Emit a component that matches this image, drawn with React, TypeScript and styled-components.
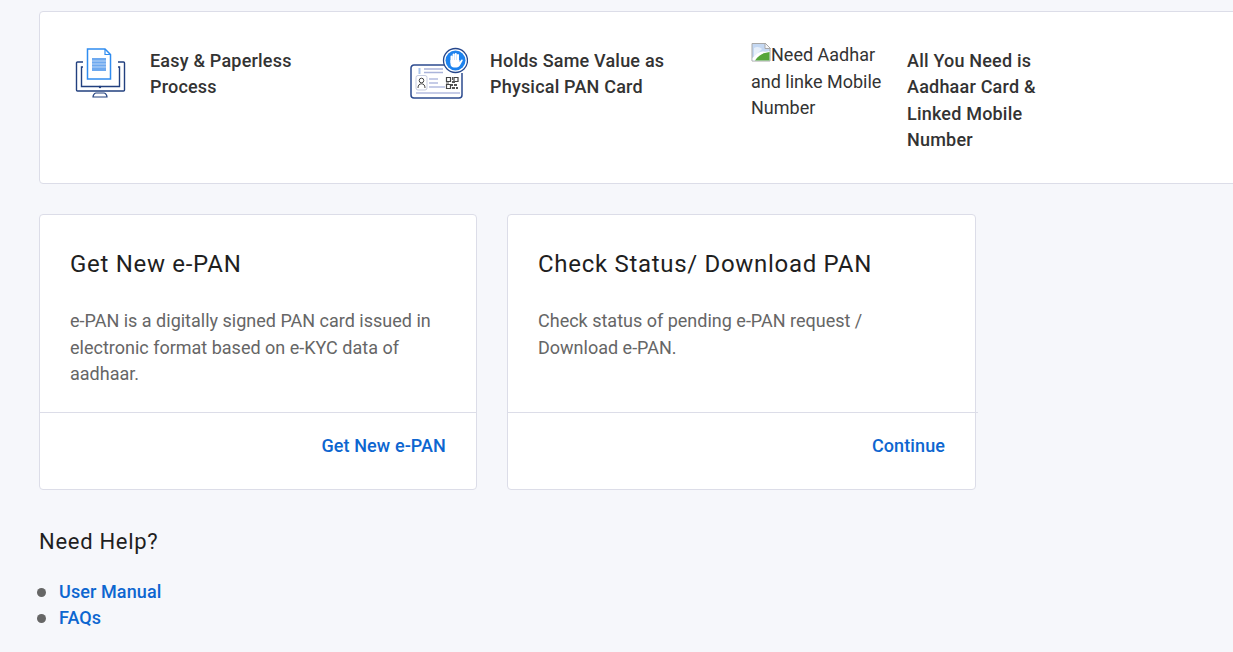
import React from "react";
import styled, { createGlobalStyle } from "styled-components";

const GlobalStyle = createGlobalStyle`
  html, body {
    margin: 0;
    padding: 0;
    background: #f6f7fb;
    overflow: hidden;
  }
  body {
    font-family: Roboto, "Liberation Sans", sans-serif;
  }
`;

const DocIcon = () => (
  <svg width="52" height="52" viewBox="0 0 52 52" fill="none">
    <path d="M8 15H2.500a1 1 0 0 0-1 1v27a1 1 0 0 0 1 1h46a1 1 0 0 0 1-1V16a1 1 0 0 0-1-1H43" stroke="#22407f" strokeWidth="1.400" />
    <path d="M8 20H6.500v19.500h38V20H43" stroke="#22407f" strokeWidth="1.400" />
    <path d="M12.500 2H30l5.500 5.500V32H12.500z" fill="#fff" stroke="#2f8cf0" strokeWidth="1.500" />
    <path d="M30 2v5.500h5.500" stroke="#2f8cf0" strokeWidth="1.200" />
    <path d="M17 11h14v13H17z" fill="#6ea9ef" />
    <path d="M17 14h14M17 17h14M17 20h14" stroke="#cfe2fa" strokeWidth="0.800" />
    <circle cx="25" cy="40" r="1.200" fill="#22407f" />
    <path d="M18 50c0-2.500 2-4 3-4h8c1 0 3 1.500 3 4z" fill="#fff" stroke="#22407f" strokeWidth="1.200" />
  </svg>
);

const CardIcon = () => (
  <svg width="58" height="52" viewBox="0 0 58 52" fill="none">
    <path d="M34 18H4a3 3 0 0 0-3 3v27a3 3 0 0 0 3 3h45a3 3 0 0 0 3-3V26" stroke="#2c4b8f" strokeWidth="1.500" />
    <path d="M14 22h19M14 25.500h19" stroke="#aab4da" strokeWidth="1.500" />
    <path d="M9.500 21v6" stroke="#aac4ea" strokeWidth="2" />
    <rect x="6" y="28.500" width="11" height="14.500" rx="2" stroke="#c5cbe0" fill="#fff" />
    <circle cx="11.500" cy="33.500" r="2.300" stroke="#444" strokeWidth="1" />
    <path d="M8 41c0-3 1.500-4.200 3.500-4.200S15 38 15 41" stroke="#444" strokeWidth="1" />
    <path d="M19 32h9M19 36h9M19 40h16M6 46h44" stroke="#b4bce0" strokeWidth="1.300" />
    <path d="M36.500 30.500h4v4h-4zM44 30.500h4v4h-4zM36.500 37.500h4v4h-4z" stroke="#444" strokeWidth="1.200" />
    <path d="M42 30h1v3h-1zM42 34h3v2h-3zM36 35.500h3v1h-3zM41 37h2v2h-2zM44 37h3v2h-3zM42 40h3v2h-3zM46 40h2v2h-2z" fill="#555" />
    <circle cx="45.500" cy="13.500" r="12" fill="#fff" stroke="#24468c" strokeWidth="1.300" />
    <circle cx="45.500" cy="13.500" r="10" fill="#1d82ee" />
    <path d="M41.500 9.500v6M43.600 7.500v7M45.800 7v7M48 8v7" stroke="#fff" strokeWidth="2" strokeLinecap="round" />
    <path d="M40.500 13h9v2l1.800-2.200c.8-.8 1.800 0 1.300.9l-2.400 4.300c-.8 1.500-2 2.500-3.700 2.500h-2.500c-2 0-3.500-1.500-3.500-3.500z" fill="#fff" />
  </svg>
);

const BrokenImageGlyph = () => (
  <BrokenGlyph width="20" height="20" viewBox="0 0 20 20">
    <path d="M1 1.500h13l5 5V19H1z" fill="#c4d8f3" stroke="#a8a8a8" />
    <path d="M3 6c3-2 6-1 8 1l-7 7H3z" fill="#e6effa" />
    <path d="M1.500 18.500V16c4-5 8-7 11-6.500 2 .3 4 .3 6-.5v9.500z" fill="#fff" />
    <path d="M4 18.500c3-4.500 7-7 10-7.500 1.500-.2 3-.5 4.500-1v8.500z" fill="#55a63a" />
    <path d="M14 1v5.500h5.500z" fill="#f5f6fa" stroke="#a8a8a8" />
  </BrokenGlyph>
);

export default function App() {
  return (
    <Page>
      <GlobalStyle />
      <Banner>
        <Feature $width={335} $iconWidth={75}>
          <IconSlot><DocIcon /></IconSlot>
          <FeatureText>Easy &amp; Paperless<br />Process</FeatureText>
        </Feature>
        <Feature $width={341} $iconWidth={80}>
          <IconSlot><CardIcon /></IconSlot>
          <FeatureText>Holds Same Value as<br />Physical PAN Card</FeatureText>
        </Feature>
        <Feature $width={320} $iconWidth={156}>
          <AltText><BrokenImageGlyph />Need Aadhar and linke Mobile Number</AltText>
          <FeatureText>All You Need is<br />Aadhaar Card &amp;<br />Linked Mobile<br />Number</FeatureText>
        </Feature>
      </Banner>

      <Cards>
        <Card $width={438}>
          <CardBody>
            <CardTitle>Get New e-PAN</CardTitle>
            <CardText>e-PAN is a digitally signed PAN card issued in electronic format based on e-KYC data of aadhaar.</CardText>
          </CardBody>
          <CardFooter>
            <ActionLink href="#">Get New e-PAN</ActionLink>
          </CardFooter>
        </Card>
        <Card $width={469}>
          <CardBody>
            <CardTitle>Check Status/ Download PAN</CardTitle>
            <CardText>Check status of pending e-PAN request /<br />Download e-PAN.</CardText>
          </CardBody>
          <CardFooter $overhang>
            <ActionLink href="#">Continue</ActionLink>
          </CardFooter>
        </Card>
      </Cards>

      <HelpTitle>Need Help?</HelpTitle>
      <HelpList>
        <HelpItem><ActionLink href="#">User Manual</ActionLink></HelpItem>
        <HelpItem><ActionLink href="#">FAQs</ActionLink></HelpItem>
      </HelpList>
    </Page>
  );
}

const Page = styled.div`
  width: 1233px;
  height: 652px;
  padding: 11px 0 0 39px;
  box-sizing: border-box;
  overflow: hidden;
  color: #1f1f1f;
`;

const Banner = styled.section`
  display: flex;
  width: 1300px;
  height: 173px;
  padding: 30px 0 0 35px;
  box-sizing: border-box;
  background: #fff;
  border: 1px solid #dcdde8;
  border-radius: 4px;
`;

const Feature = styled.div<{ $width: number; $iconWidth: number }>`
  display: grid;
  grid-template-columns: ${(p) => p.$iconWidth}px 1fr;
  align-items: start;
  width: ${(p) => p.$width}px;
  flex: none;
`;

const IconSlot = styled.div`
  display: flex;
  margin-top: 5px;
`;

const FeatureText = styled.p`
  margin: 6px 0 0;
  font-size: 18px;
  font-weight: 500;
  line-height: 26.300px;
  letter-spacing: 0.200px;
  color: #333;
`;

const AltText = styled.div`
  width: 132px;
  font-size: 18px;
  line-height: 26.500px;
  color: #333;
`;

const BrokenGlyph = styled.svg`
  vertical-align: -1px;
`;

const Cards = styled.div`
  display: flex;
  gap: 30px;
  margin-top: 30px;
`;

const Card = styled.article<{ $width: number }>`
  display: flex;
  flex-direction: column;
  width: ${(p) => p.$width}px;
  height: 276px;
  box-sizing: border-box;
  background: #fff;
  border: 1px solid #dcdde8;
  border-radius: 4px;
`;

const CardBody = styled.div`
  flex: none;
  height: 197px;
  padding: 33px 30px 0;
  box-sizing: border-box;
`;

const CardTitle = styled.h2`
  margin: 0;
  font-size: 24px;
  font-weight: 400;
  line-height: 32px;
  letter-spacing: 0.700px;
  color: #1f1f1f;
`;

const CardText = styled.p`
  margin: 28.200px 0 0;
  font-size: 18px;
  line-height: 26.400px;
  color: #666;
`;

const CardFooter = styled.footer<{ $overhang?: boolean }>`
  display: flex;
  justify-content: flex-end;
  align-items: center;
  height: 66px;
  padding: 0 30px;
  border-top: 1px solid #dcdde8;
  ${(p) => p.$overhang && "margin-right: -3px; padding-right: 33px;"}
`;

const ActionLink = styled.a`
  font-size: 18px;
  font-weight: 500;
  line-height: 26px;
  letter-spacing: 0.100px;
  color: #0d66d0;
  text-decoration: none;
`;

const HelpTitle = styled.h3`
  margin: 36px 0 0;
  font-size: 22px;
  font-weight: 400;
  line-height: 32px;
  letter-spacing: 0.700px;
  color: #1f1f1f;
`;

const HelpList = styled.ul`
  margin: 21px 0 0;
  padding: 0;
  list-style: none;
`;

const HelpItem = styled.li`
  display: flex;
  align-items: center;
  gap: 13px;
  height: 26px;
  &::before {
    content: "";
    width: 9px;
    height: 9px;
    margin-left: -2px;
    border-radius: 50%;
    background: #666;
  }
`;
